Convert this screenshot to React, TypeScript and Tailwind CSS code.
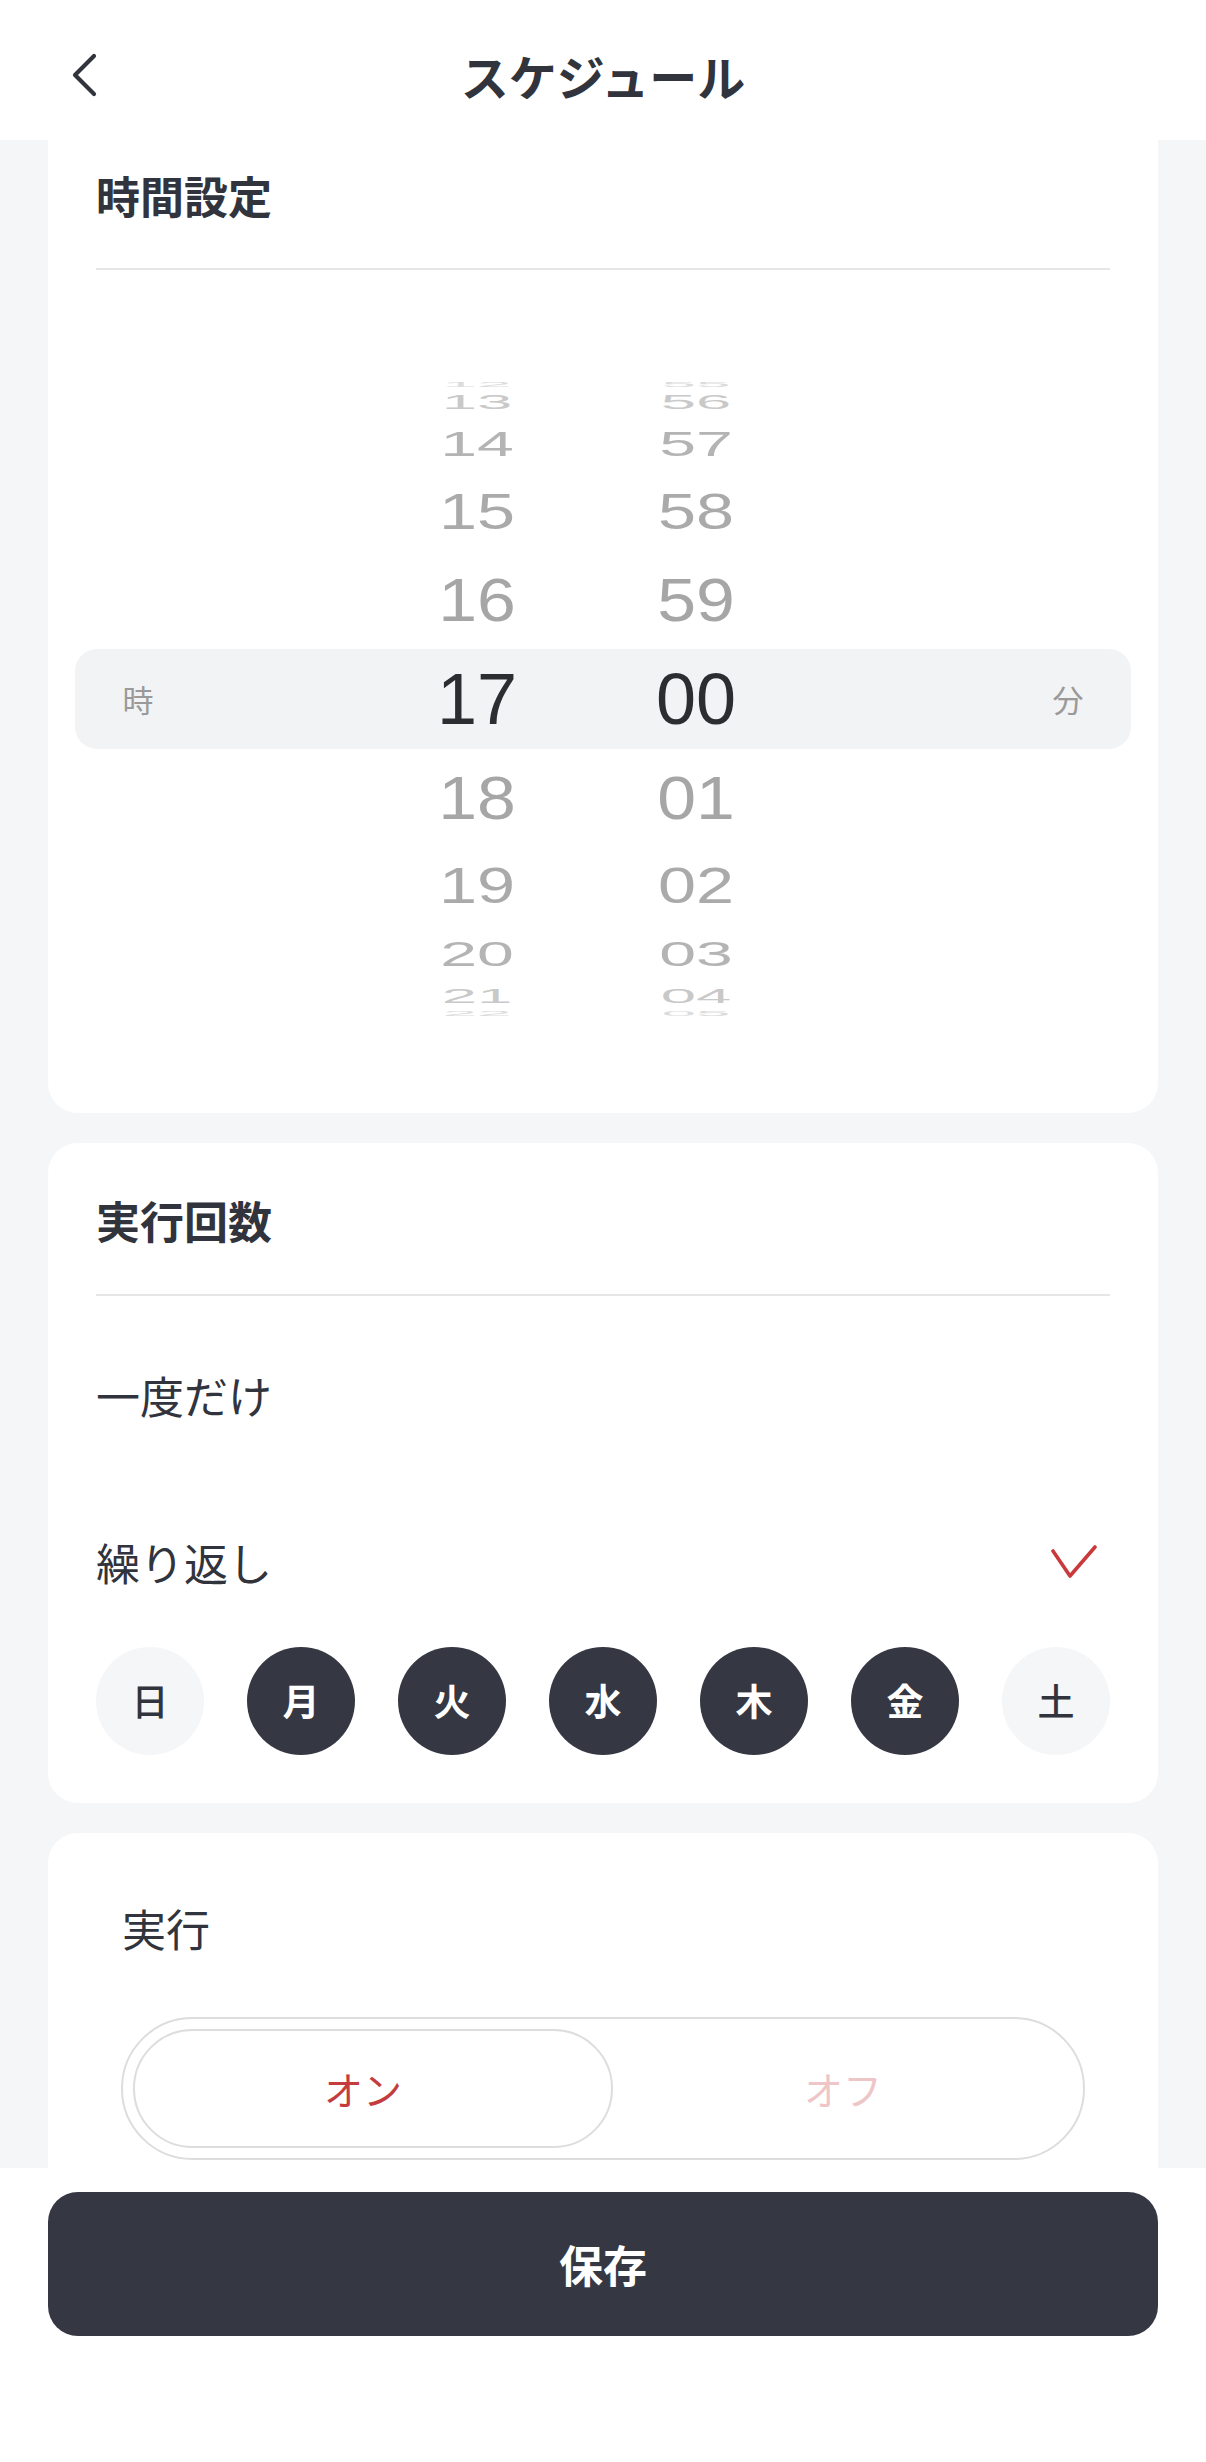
import React from "react";

type Row = { h: string; m: string; hgt: string; s: string; c: string };

const topRows: Row[] = [
  { h: "12", m: "55", hgt: "h-[8px]", s: "scale-y-[0.1] scale-x-[0.86]", c: "text-[#dcdcdc]" },
  { h: "13", m: "56", hgt: "h-[26px]", s: "scale-y-[0.29] scale-x-[0.88]", c: "text-[#c9c9c9]" },
  { h: "14", m: "57", hgt: "h-[58px]", s: "scale-y-[0.49] scale-x-[0.92]", c: "text-[#b4b4b4]" },
  { h: "15", m: "58", hgt: "h-[78px]", s: "scale-y-[0.69] scale-x-[0.95]", c: "text-[#aaaaaa]" },
  { h: "16", m: "59", hgt: "h-[98px]", s: "scale-y-[0.86] scale-x-[0.97]", c: "text-[#a6a6a6]" },
];

const bottomRows: Row[] = [
  { h: "18", m: "01", hgt: "h-[98px]", s: "scale-y-[0.86] scale-x-[0.97]", c: "text-[#a6a6a6]" },
  { h: "19", m: "02", hgt: "h-[78px]", s: "scale-y-[0.69] scale-x-[0.95]", c: "text-[#aaaaaa]" },
  { h: "20", m: "03", hgt: "h-[58px]", s: "scale-y-[0.49] scale-x-[0.92]", c: "text-[#b4b4b4]" },
  { h: "21", m: "04", hgt: "h-[26px]", s: "scale-y-[0.29] scale-x-[0.88]", c: "text-[#c9c9c9]" },
  { h: "22", m: "05", hgt: "h-[8px]", s: "scale-y-[0.1] scale-x-[0.86]", c: "text-[#dcdcdc]" },
];

const GRID =
  "grid grid-cols-[126px_196px_160px_59px_160px_1fr_126px] grid-rows-[minmax(0,1fr)] items-center";
const NUM = "font-['Liberation_Sans',Arial,sans-serif] text-[72px] leading-[72px]";

function WheelRow({ r }: { r: Row }) {
  return (
    <div className={`${GRID} ${r.hgt}`}>
      <div />
      <div />
      <div className="h-0 flex items-center justify-center">
        <span className={`inline-block ${NUM} ${r.s} ${r.c}`}>{r.h}</span>
      </div>
      <div />
      <div className="h-0 flex items-center justify-center">
        <span className={`inline-block ${NUM} ${r.s} ${r.c}`}>{r.m}</span>
      </div>
      <div />
      <div />
    </div>
  );
}

const days = [
  { d: "日", on: false },
  { d: "月", on: true },
  { d: "火", on: true },
  { d: "水", on: true },
  { d: "木", on: true },
  { d: "金", on: true },
  { d: "土", on: false },
];

export default function App() {
  return (
    <div className="w-[1206px] h-[2462px] flex flex-col bg-white overflow-hidden font-['Noto_Sans_CJK_JP','Noto_Sans',sans-serif] text-[#31343c]">
      {/* Header */}
      <header className="h-[140px] shrink-0 bg-white grid grid-cols-[200px_1fr_200px] items-center pt-[10px]">
        <div className="pl-[72px] flex items-center">
          <svg width="26" height="44" viewBox="0 0 26 44" fill="none">
            <polyline
              points="22,3 3,22 22,41"
              stroke="#31343c"
              strokeWidth="4.2"
              strokeLinecap="round"
              strokeLinejoin="round"
            />
          </svg>
        </div>
        <div className="text-center text-[48px] font-bold leading-[60px] text-[#31343c]">
          スケジュール
        </div>
        <div />
      </header>

      {/* Scroll area */}
      <main className="flex-1 min-h-0 bg-[#f5f6f8] overflow-hidden px-[48px] flex flex-col gap-[30px]">
        {/* Card 1 */}
        <section className="shrink-0 bg-white rounded-b-[30px] pt-[25px] pb-[96px]">
          <div className="px-[48px]">
            <h2 className="text-[44px] font-bold leading-[60px]">時間設定</h2>
            <div className="mt-[43px] h-[2px] bg-[#e6e6e6]" />
          </div>
          <div className="mt-[111px] px-[27px] flex flex-col">
            {topRows.map((r) => (
              <WheelRow key={r.h} r={r} />
            ))}
            <div className={`${GRID} h-[100px] bg-[#f2f3f5] rounded-[22px]`}>
              <div className="flex justify-center text-[31px] text-[#9a9a9a]">時</div>
              <div />
              <div className="flex justify-center">
                <span className={`inline-block ${NUM} text-[#2c2d31]`}>17</span>
              </div>
              <div />
              <div className="flex justify-center">
                <span className={`inline-block ${NUM} text-[#2c2d31]`}>00</span>
              </div>
              <div />
              <div className="flex justify-center text-[31px] text-[#9a9a9a]">分</div>
            </div>
            {bottomRows.map((r) => (
              <WheelRow key={r.h} r={r} />
            ))}
          </div>
        </section>

        {/* Card 2 */}
        <section className="shrink-0 bg-white rounded-[30px] px-[48px] pt-[47px] pb-[48px]">
          <h2 className="text-[44px] font-bold leading-[60px]">実行回数</h2>
          <div className="mt-[44px] h-[2px] bg-[#e6e6e6]" />
          <div className="mt-[15px] h-[167px] flex items-center text-[44px] leading-[60px]">
            一度だけ
          </div>
          <div className="h-[167px] flex items-center justify-between text-[44px] leading-[60px]">
            <span>繰り返し</span>
            <svg className="mr-[13px]" width="46" height="34" viewBox="0 0 46 34" fill="none">
              <polyline
                points="2,6 19,31 44,2"
                stroke="#c93a3c"
                strokeWidth="3.6"
                strokeLinecap="round"
                strokeLinejoin="round"
              />
            </svg>
          </div>
          <div className="mt-[2px] flex justify-between">
            {days.map((x) => (
              <div
                key={x.d}
                className={
                  x.on
                    ? "w-[108px] h-[108px] rounded-full bg-[#353843] text-white flex items-center justify-center text-[37px] font-bold"
                    : "w-[108px] h-[108px] rounded-full bg-[#f5f6f8] text-[#31343c] flex items-center justify-center text-[37px] font-medium"
                }
              >
                {x.d}
              </div>
            ))}
          </div>
        </section>

        {/* Card 3 */}
        <section className="shrink-0 bg-white rounded-[30px] px-[73px] pt-[65px] pb-[120px]">
          <div className="text-[44px] leading-[60px] pl-[1px]">実行</div>
          <div className="mt-[59px] h-[143px] rounded-full border-2 border-[#dddddd] p-[10px] flex">
            <div className="w-[480px] h-full rounded-full border-2 border-[#dddddd] flex items-center justify-center text-[39px] text-[#c43c3d] pr-[20px]">
              オン
            </div>
            <div className="flex-1 flex items-center justify-center text-[39px] text-[#efc6c8]">
              オフ
            </div>
          </div>
        </section>
      </main>

      {/* Footer */}
      <footer className="h-[294px] shrink-0 bg-white px-[48px] pt-[24px]">
        <button className="w-full h-[144px] rounded-[30px] bg-[#353843] text-white text-[44px] font-bold flex items-center justify-center">
          保存
        </button>
      </footer>
    </div>
  );
}
